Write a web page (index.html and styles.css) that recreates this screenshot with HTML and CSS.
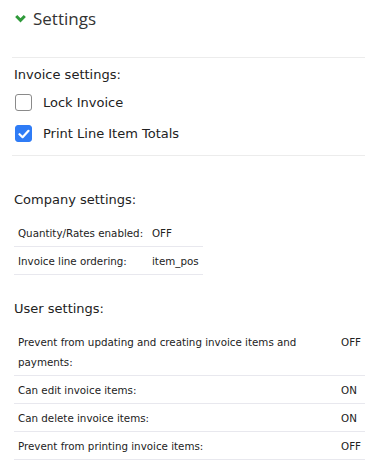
FILE: index.html
```html
<!DOCTYPE html>
<html lang="en">
<head>
    <meta charset="UTF-8">
    <title>Settings</title>
    <link rel="stylesheet" href="styles.css">
</head>
<body>
    <div class="panel">
        <div class="panel-head">
            <svg class="chevron" width="11" height="9" viewBox="0 0 11 9">
                <path d="M1.2 2 L5.5 6.3 L9.8 2" fill="none" stroke="#2f9a3a" stroke-width="3"/>
            </svg>
            <span>Settings</span>
        </div>

        <div class="section">
            <h4>Invoice settings:</h4>
            <label class="check-row">
                <span class="box"></span>
                Lock Invoice
            </label>
            <label class="check-row">
                <span class="box checked">
                    <svg width="12" height="10" viewBox="0 0 12 10">
                        <path d="M1.5 5.2 L4.6 8.2 L10.5 1.8" fill="none" stroke="#fff" stroke-width="2.2" stroke-linecap="round" stroke-linejoin="round"/>
                    </svg>
                </span>
                Print Line Item Totals
            </label>
        </div>

        <div class="section company">
            <h4>Company settings:</h4>
            <table class="settings-table small">
                <tr><td>Quantity/Rates enabled:</td><td>OFF</td></tr>
                <tr><td>Invoice line ordering:</td><td>item_pos</td></tr>
            </table>
        </div>

        <div class="section user">
            <h4>User settings:</h4>
            <table class="settings-table wide">
                <tr><td>Prevent from updating and creating invoice items and payments:</td><td>OFF</td></tr>
                <tr><td>Can edit invoice items:</td><td>ON</td></tr>
                <tr><td>Can delete invoice items:</td><td>ON</td></tr>
                <tr><td>Prevent from printing invoice items:</td><td>OFF</td></tr>
            </table>
        </div>
    </div>
</body>
</html>
```

FILE: styles.css
```css
body {
    margin: 0;
    font-family: "DejaVu Sans", Verdana, sans-serif;
    color: #222;
    background: #fff;
}
.panel {
    padding: 0 14px 0 12px;
}
.panel-head {
    display: flex;
    align-items: center;
    height: 16px;
    padding: 10px 0 31px 3px;
    font-family: "Open Sans", sans-serif;
    font-size: 17px;
    color: #333;
    border-bottom: 1px solid #ececec;
    margin-bottom: 9px;
}
.chevron {
    margin-right: 7px;
}
.section {
    padding-left: 2px;
}
.section h4 {
    margin: 0;
    font-weight: normal;
    font-size: 13px;
}
.check-row {
    display: flex;
    align-items: center;
    font-size: 13px;
    height: 31px;
}
.check-row:first-of-type {
    margin-top: 5px;
}
.box {
    width: 15px;
    height: 15px;
    border: 1px solid #8a8a8a;
    border-radius: 3px;
    margin: 0 11px 0 1px;
    display: flex;
    align-items: center;
    justify-content: center;
}
.box.checked {
    background: #2f7cf6;
    border-color: #2f7cf6;
}
.company {
    border-top: 1px solid #ececec;
    margin-top: 6px;
    padding-top: 36px;
}
.settings-table {
    border-collapse: collapse;
    font-size: 10.3px;
    margin-top: 12px;
}
.settings-table td {
    border-bottom: 1px solid #e8e8ee;
    padding: 0 4px;
    height: 27px;
    vertical-align: middle;
}
.small td:first-child {
    width: 126px;
}
.small td:last-child {
    width: 43px;
}
.user {
    margin-top: 26px;
}
.wide {
    width: 100%;
    margin-top: 12px;
}
.wide td {
    height: auto;
    line-height: 20px;
    padding: 4px 4px 3px;
}
.wide td:first-child {
    padding-right: 40px;
}
.wide td:last-child {
    vertical-align: top;
    width: 19px;
}
```
